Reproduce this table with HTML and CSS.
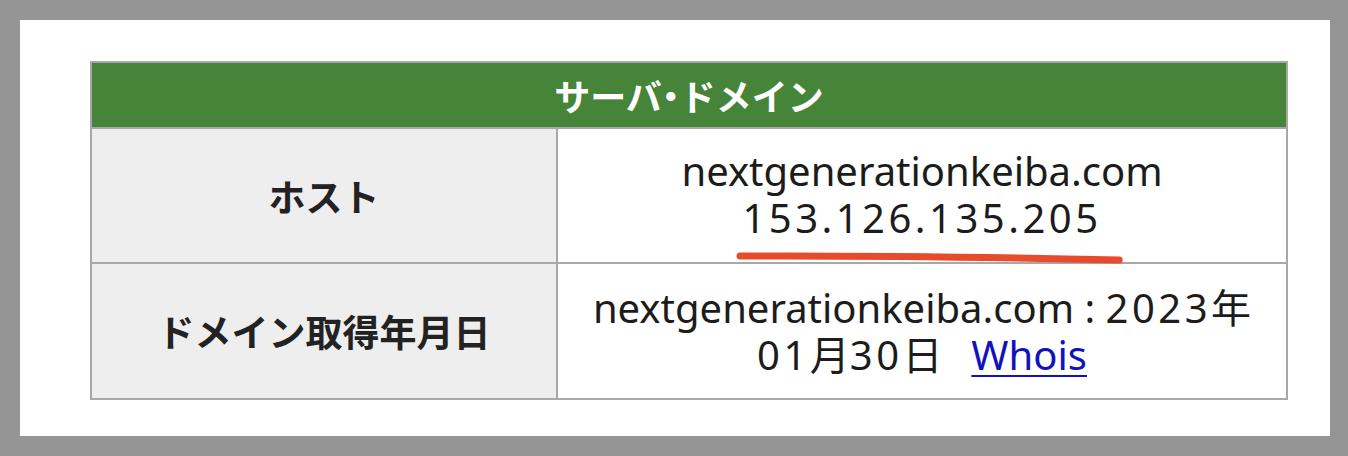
FILE: index.html
```html
<!DOCTYPE html>
<html lang="ja">
<head>
<meta charset="utf-8">
<link rel="stylesheet" href="styles.css">
</head>
<body>
<div class="panel">
  <table class="info">
    <thead>
      <tr><th colspan="2" class="head">サーバ<span class="dot">・</span>ドメイン</th></tr>
    </thead>
    <tbody>
      <tr class="row1">
        <th class="label">ホスト</th>
        <td class="value">nextgenerationkeiba.com<br><span class="ip num">153.126.135.205<svg class="mark" viewBox="0 0 390 12" preserveAspectRatio="none"><path d="M4 4 C 120 3.5, 250 5, 386 8" stroke="#e84a2c" stroke-width="7" fill="none" stroke-linecap="round"/></svg></span></td>
      </tr>
      <tr class="row2">
        <th class="label">ドメイン取得年月日</th>
        <td class="value">nextgenerationkeiba.com : <span class="num">2023</span>年<br><span class="num">01</span>月<span class="num">30</span>日&nbsp;&nbsp;<a href="#" class="link">Whois</a></td>
      </tr>
    </tbody>
  </table>
</div>
</body>
</html>
```
FILE: styles.css
```css
html, body {
  margin: 0;
  padding: 0;
}
body {
  background: #959595;
  width: 1348px;
  height: 456px;
  overflow: hidden;
  font-family: "Noto Sans CJK JP", "Noto Sans", sans-serif;
}
.panel {
  background: #ffffff;
  margin: 20px 18px 0 20px;
  height: 416px;
  box-sizing: border-box;
  padding: 41px 0 0 70px;
}
.info {
  border-collapse: collapse;
  width: 1198px;
  border: 2px solid #a3a3a3;
}
.info th, .info td {
  border: 2px solid #a8a8a8;
  padding: 0;
  text-align: center;
  vertical-align: middle;
}
.head {
  background: #46843a;
  color: #ffffff;
  font-size: 36px;
  font-weight: 700;
  height: 64px;
  line-height: 1;
  border-color: #a3a3a3;
}
.dot {
  font-feature-settings: "palt" 1;
}
.label {
  background: #eeeeee;
  width: 464px;
  color: #222222;
  font-size: 37px;
  font-weight: 700;
}
.value {
  color: #1c1c1c;
  font-family: "Noto Sans", "Noto Sans CJK JP", sans-serif;
  font-size: 40px;
  line-height: 47px;
  font-weight: 400;
}
.num {
  letter-spacing: 3.5px;
}
.row1 { height: 135px; }
.row2 { height: 136px; }
.row1 .value { padding-bottom: 4px; }
.ip {
  position: relative;
}
.mark {
  position: absolute;
  left: -6px;
  width: calc(100% + 28px);
  top: 62px;
  height: 12px;
}
.link {
  color: #1111c0;
  margin-left: 8px;
  text-decoration: underline;
  text-decoration-thickness: 2px;
  text-underline-offset: 5px;
}
```
